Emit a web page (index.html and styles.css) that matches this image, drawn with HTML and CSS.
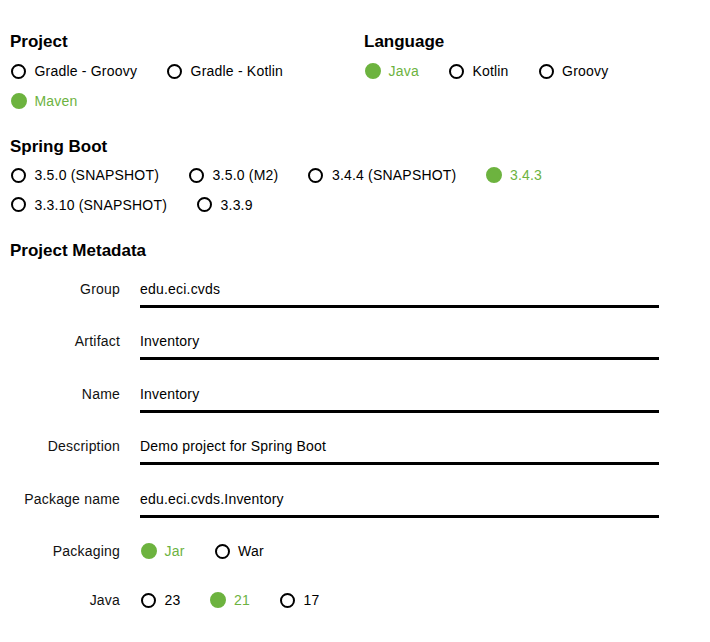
FILE: index.html
```html
<!DOCTYPE html>
<html lang="en">
<head>
<meta charset="utf-8">
<title>Spring Initializr</title>
<link rel="stylesheet" href="styles.css">
</head>
<body>
<main class="page">
  <div class="top">
    <section class="group">
      <h2 class="title">Project</h2>
      <div class="radios">
        <span class="radio"><span class="dot"></span>Gradle - Groovy</span>
        <span class="radio"><span class="dot"></span>Gradle - Kotlin</span>
        <span class="radio checked"><span class="dot"></span>Maven</span>
      </div>
    </section>
    <section class="group">
      <h2 class="title">Language</h2>
      <div class="radios">
        <span class="radio checked"><span class="dot"></span>Java</span>
        <span class="radio"><span class="dot"></span>Kotlin</span>
        <span class="radio"><span class="dot"></span>Groovy</span>
      </div>
    </section>
  </div>

  <section class="group boot">
    <h2 class="title">Spring Boot</h2>
    <div class="radios">
      <span class="radio"><span class="dot"></span>3.5.0 (SNAPSHOT)</span>
      <span class="radio"><span class="dot"></span>3.5.0 (M2)</span>
      <span class="radio"><span class="dot"></span>3.4.4 (SNAPSHOT)</span>
      <span class="radio checked"><span class="dot"></span>3.4.3</span>
      <span class="radio"><span class="dot"></span>3.3.10 (SNAPSHOT)</span>
      <span class="radio"><span class="dot"></span>3.3.9</span>
    </div>
  </section>

  <section class="group meta">
    <h2 class="title">Project Metadata</h2>
    <div class="fields">
      <div class="field"><span class="label">Group</span><span class="input">edu.eci.cvds</span></div>
      <div class="field"><span class="label">Artifact</span><span class="input">Inventory</span></div>
      <div class="field"><span class="label">Name</span><span class="input">Inventory</span></div>
      <div class="field"><span class="label">Description</span><span class="input">Demo project for Spring Boot</span></div>
      <div class="field"><span class="label">Package name</span><span class="input">edu.eci.cvds.Inventory</span></div>
      <div class="field field-radio pack"><span class="label">Packaging</span>
        <div class="radios">
          <span class="radio checked"><span class="dot"></span>Jar</span>
          <span class="radio"><span class="dot"></span>War</span>
        </div>
      </div>
      <div class="field field-radio"><span class="label">Java</span>
        <div class="radios">
          <span class="radio"><span class="dot"></span>23</span>
          <span class="radio checked"><span class="dot"></span>21</span>
          <span class="radio"><span class="dot"></span>17</span>
        </div>
      </div>
    </div>
  </section>
</main>
</body>
</html>
```

FILE: styles.css
```css
html, body {
  margin: 0;
  padding: 0;
  background: #fff;
}

body {
  font-family: "Liberation Sans", Arial, sans-serif;
  font-size: 14px;
  letter-spacing: 0.2px;
  color: #000;
}

.page {
  padding: 32px 10px 0 10px;
  width: 700px;
  box-sizing: border-box;
}

.top {
  display: grid;
  grid-template-columns: 344px 1fr;
  column-gap: 10px;
}

.title {
  margin: 0 0 9px 0;
  font-size: 17px;
  font-weight: bold;
  line-height: 20px;
  letter-spacing: 0;
}

.radios {
  display: flex;
  flex-wrap: wrap;
  column-gap: 29px;
  row-gap: 9.5px;
}

.radio {
  display: inline-flex;
  align-items: center;
  height: 20px;
  line-height: 20px;
  white-space: nowrap;
}

.dot {
  box-sizing: border-box;
  width: 15px;
  height: 15px;
  margin-left: 1px;
  margin-right: 8.5px;
  border: 2px solid #000;
  border-radius: 50%;
  flex: none;
}

.radio.checked {
  color: #6db33f;
}

.radio.checked .dot {
  width: 16px;
  height: 16px;
  margin-left: 1px;
  margin-right: 7.5px;
  border-color: #6db33f;
  background: #6db33f;
}

.boot {
  margin-top: 26.5px;
}

.boot .title {
  margin-bottom: 8px;
}

.meta {
  margin-top: 26px;
}

.meta .title {
  margin-bottom: 14px;
}

.fields {
  display: flex;
  flex-direction: column;
}

.field {
  display: grid;
  grid-template-columns: 110px 519px;
  column-gap: 20px;
  align-items: start;
  margin-bottom: 19.5px;
}

.label {
  text-align: right;
  padding-top: 4px;
  line-height: 20px;
  color: #111;
}

.input {
  display: block;
  padding: 4px 0 6px 0;
  line-height: 20px;
  border-bottom: 3px solid #000;
}

.field-radio .radios {
  padding-top: 4px;
}

.field-radio.pack {
  margin-bottom: 25px;
}
```
